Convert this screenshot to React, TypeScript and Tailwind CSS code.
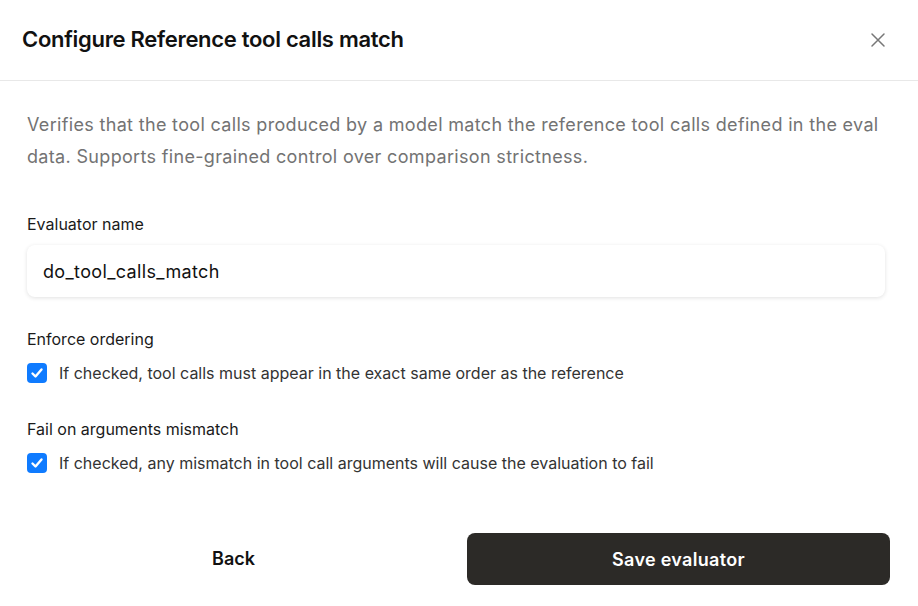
export default function App() {
  return (
    <div className="w-[918px] h-[606px] bg-white flex flex-col font-['Inter',sans-serif] overflow-hidden">
      {/* Header */}
      <div className="h-[81px] flex items-center justify-between pl-[22px] pr-[32px] border-b border-[#e8e8e8] shrink-0">
        <h1 className="text-[22px] font-semibold text-[#111] tracking-[-0.3px] -mt-[2px]">
          Configure Reference tool calls match
        </h1>
        <button className="text-[#777]">
          <svg width="16" height="16" viewBox="0 0 16 16" fill="none">
            <path d="M2 2L14 14M14 2L2 14" stroke="currentColor" strokeWidth="1.5" strokeLinecap="round" />
          </svg>
        </button>
      </div>

      {/* Body */}
      <div className="flex flex-col pl-[27px] pr-[33px] pt-[28px]">
        <p className="text-[18px] leading-[32px] text-[#737373] tracking-[0.33px]">
          Verifies that the tool calls produced by a model match the reference tool calls defined in the eval
          data. Supports fine-grained control over comparison strictness.
        </p>

        <label className="mt-[41px] text-[16px] leading-[20px] text-[#1a1a1a]">Evaluator name</label>
        <div className="mt-[11px] h-[52px] rounded-[8px] bg-white shadow-[0_1px_4px_rgba(0,0,0,0.12)] flex items-center px-[16px]">
          <span className="text-[18px] text-[#111] tracking-[0.35px]">do_tool_calls_match</span>
        </div>

        <div className="mt-[32px] text-[16px] leading-[20px] text-[#1a1a1a]">Enforce ordering</div>
        <CheckRow text="If checked, tool calls must appear in the exact same order as the reference" />

        <div className="mt-[36px] text-[16px] leading-[20px] text-[#1a1a1a]">Fail on arguments mismatch</div>
        <CheckRow text="If checked, any mismatch in tool call arguments will cause the evaluation to fail" />
      </div>

      {/* Footer */}
      <div className="mt-auto mb-[21px] pl-[22px] pr-[28px] flex gap-[22px]">
        <button className="flex-1 h-[52px] rounded-[8px] text-[18px] font-semibold text-[#111] -mt-px">Back</button>
        <button className="flex-1 h-[52px] rounded-[8px] bg-[#2c2a27] text-[18px] font-semibold text-white tracking-[0.3px]">
          Save evaluator
        </button>
      </div>
    </div>
  );
}

function CheckRow({ text }: { text: string }) {
  return (
    <div className="mt-[14px] flex items-center gap-[12px]">
      <span className="w-[20px] h-[20px] rounded-[4px] bg-[#0f7bff] flex items-center justify-center shrink-0">
        <svg width="14" height="14" viewBox="0 0 14 14" fill="none">
          <path d="M2.5 7.5L5.5 10.5L11.5 3.5" stroke="white" strokeWidth="2.4" strokeLinecap="round" strokeLinejoin="round" />
        </svg>
      </span>
      <span className="text-[16px] leading-[20px] text-[#333]">{text}</span>
    </div>
  );
}
